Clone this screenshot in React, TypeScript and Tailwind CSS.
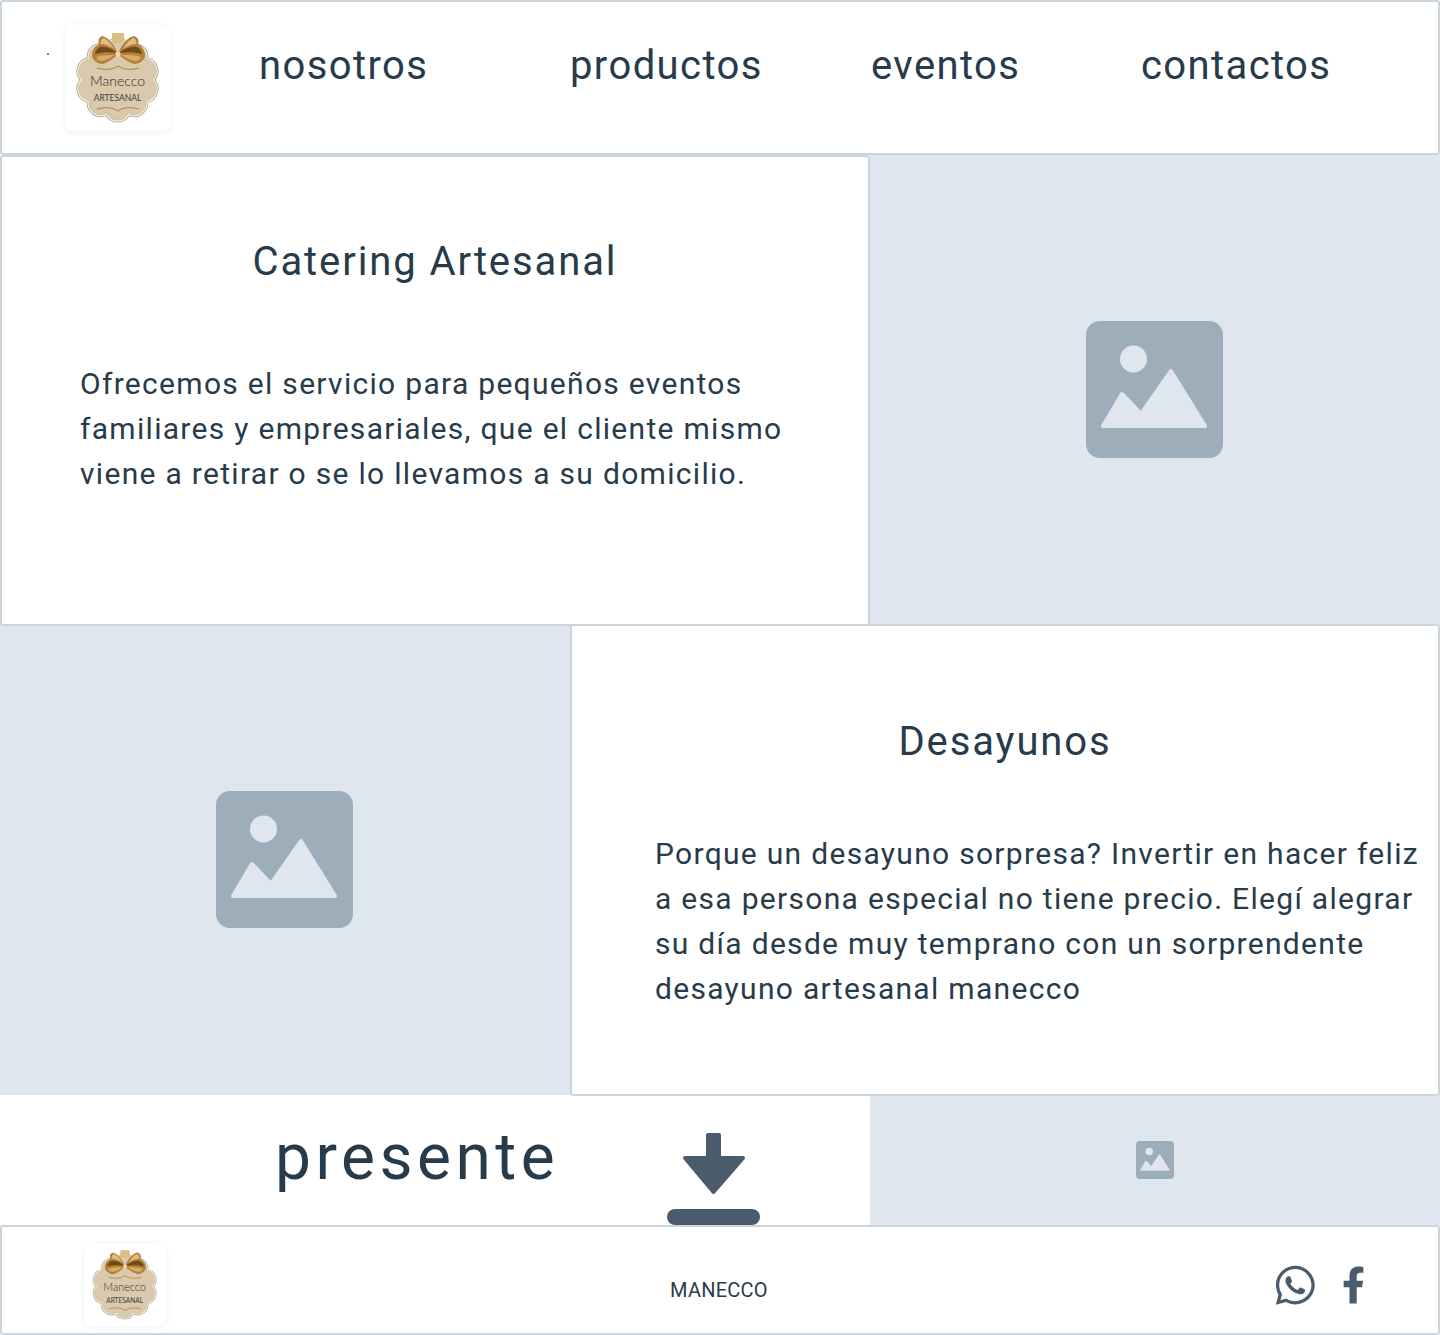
import React from 'react'
import {FaFacebookF, FaWhatsapp} from 'react-icons/fa'

const font = "font-['Roboto',sans-serif]"

// scalloped edge of the badge, lobes around a circle
const lobes = 10
const badgePoints = Array.from({length: lobes}, (_, i) => {
  const a = (i / lobes) * Math.PI * 2 + Math.PI / lobes
  return [52.5 + 34.5 * Math.sin(a), 55 + 34.5 * Math.cos(a)]
})
const badgePath =
  badgePoints
    .map(([x, y], i) => (i === 0 ? `M${x} ${y}` : `A11.500 11.500 0 0 0 ${x} ${y}`))
    .join(' ') +
  ` A11.500 11.500 0 0 0 ${badgePoints[0][0]} ${badgePoints[0][1]} Z`

const Logo: React.FC<{size: string}> = ({size}) => (
  <div
    className={`${size} shrink-0 rounded-lg bg-white shadow-[0_1px_6px_rgba(0,0,0,0.07)]`}
  >
    <svg viewBox="0 0 106 106" className="h-full w-full tracking-normal">
      <path d={badgePath} fill="#dbc9ae" stroke="#b3a37c" strokeWidth="5" />
      <path d={badgePath} fill="#dbc9ae" stroke="#f1eee5" strokeWidth="3.4" />
      <path d={badgePath} fill="#dbc9ae" stroke="#c4b896" strokeWidth="0.8" />
      <path d="M47 8h12v10H47z" fill="#dcbd84" />
      {/* bow wings */}
      <path
        d="M53 29C49 19 43 12 37 11 33 13 33 16 34 19 30 21 27 25 27 31 28 36 33 39 38 39 44 37 49 33 53 29Z"
        fill="#b5813a"
      />
      <path
        d="M53 29C57 19 63 12 69 11 74 13 74 16 73 19 77 21 80 25 80 31 79 36 74 39 69 39 63 37 57 33 53 29Z"
        fill="#b5813a"
      />
      <path
        d="M52 28C46 23 41 21 35 22 32 24 30 26 30 29 37 27 45 27 52 28ZM54 28C60 23 66 21 72 22 75 24 77 26 77 29 70 27 62 27 54 28Z"
        fill="#6e4a17"
      />
      <path
        d="M39 13C44 16 47 20 49 24 45 21 40 19 36 19 35 17 36 14 39 13ZM68 13C63 16 60 20 58 24 62 21 67 19 71 19 72 17 71 14 68 13Z"
        fill="#e0bd80"
      />
      <path
        d="M31 32C37 30 44 30 50 30 45 33 40 36 35 36 33 35 32 34 31 32ZM76 32C70 30 63 30 56 30 61 33 67 36 72 36 74 35 75 34 76 32Z"
        fill="#d8ac66"
      />
      <circle cx="53" cy="29" r="2.6" fill="#ecd8a8" />
      <path
        d="M32 43C40 45 47 45 53 41 59 45 66 45 74 43"
        fill="none"
        stroke="#a8803f"
        strokeWidth="1"
      />
      <text
        x="52.500"
        y="61"
        textAnchor="middle"
        fontFamily="Lato, sans-serif"
        fontSize="14"
        fontWeight="300"
        fill="#2f2d2c"
      >
        Manecco
      </text>
      <text
        x="52.500"
        y="76"
        textAnchor="middle"
        fontFamily="Lato, sans-serif"
        fontSize="8.500"
        fill="#3f3c3a"
      >
        ARTESANAL
      </text>
      <path
        d="M32 84C40 82 47 82 53 86 59 82 66 82 74 84"
        fill="none"
        stroke="#a8803f"
        strokeWidth="1"
      />
    </svg>
  </div>
)

const ImageIcon: React.FC<{size: string}> = ({size}) => (
  <svg viewBox="0 0 137 137" className={size}>
    <rect width="137" height="137" rx="14" fill="#9eadba" />
    <circle cx="47.5" cy="38" r="13.5" fill="#dfe6ee" />
    <path
      d="M17 105 36 73 55 93 85 50 119 105Z"
      fill="#dfe6ee"
      stroke="#dfe6ee"
      strokeWidth="4"
      strokeLinejoin="round"
    />
  </svg>
)

const DownloadIcon = () => (
  <svg viewBox="0 0 93 93" className="h-[93px] w-[93px] shrink-0">
    <path
      d="M41 3h11v23h24L46.500 60 18 26h23Z"
      fill="#4a5c6b"
      stroke="#4a5c6b"
      strokeWidth="4"
      strokeLinejoin="round"
    />
    <rect x="0" y="77" width="93" height="16" rx="8" fill="#4a5c6b" />
  </svg>
)

const ImagePanel: React.FC<{width: string}> = ({width}) => (
  <div
    className={`${width} flex items-center justify-center bg-[#dfe6ee] pr-[1px] pb-[1px]`}
  >
    <ImageIcon size="h-[137px] w-[137px]" />
  </div>
)

const TextCard: React.FC<{
  title: string
  lines: string[]
  box: string
  titleGap: string
  bodyGap: string
}> = ({title, lines, box, titleGap, bodyGap}) => (
  <div
    className={`${box} ${titleGap} relative z-10 w-[870px] rounded-[3px] border-2 border-[#cbd5e0] bg-white`}
  >
    <h2 className="text-center text-[40px] leading-[60px] tracking-[1.9px] text-[#283b4b]">
      {title}
    </h2>
    <p
      className={`${bodyGap} text-[30px] leading-[45px] tracking-[1.3px] whitespace-nowrap text-[#283b4b]`}
    >
      {lines.map((line) => (
        <span key={line} className="block">
          {line}
        </span>
      ))}
    </p>
  </div>
)

export default function App() {
  return (
    <div className={`${font} flex h-[1335px] w-[1440px] flex-col bg-white`}>
      <header className="relative flex h-[155px] items-start rounded-[3px] border-2 border-[#cbd5e0] bg-white pl-[63px] text-[40px] tracking-[1.4px] text-[#283b4b]">
        <span className="absolute top-[51px] left-[45px] h-[2px] w-[2px] rounded-full bg-[#4a5c6b]" />
        <div className="mt-[23px]">
          <Logo size="h-[106px] w-[106px]" />
        </div>
        <nav className="ml-[88px] flex pt-[34px] leading-[60px]">
          <a className="w-[311px]">nosotros</a>
          <a className="w-[301px]">productos</a>
          <a className="w-[270px]">eventos</a>
          <a>contactos</a>
        </nav>
      </header>

      <section className="flex h-[470px]">
        <TextCard
          title="Catering Artesanal"
          box="h-[471px] shrink-0"
          titleGap="pt-[75px]"
          bodyGap="mt-[69px] pl-[78px]"
          lines={[
            'Ofrecemos el servicio para pequeños eventos',
            'familiares y empresariales, que el cliente mismo',
            'viene a retirar o se lo llevamos a su domicilio.'
          ]}
        />
        <ImagePanel width="w-[570px]" />
      </section>

      <section className="flex h-[470px]">
        <ImagePanel width="w-[570px]" />
        <TextCard
          title="Desayunos"
          box="mt-[-1px] h-[472px] shrink-0"
          titleGap="pt-[86px]"
          bodyGap="mt-[59px] pl-[83px]"
          lines={[
            'Porque un desayuno sorpresa? Invertir en hacer feliz',
            'a esa persona especial no tiene precio. Elegí alegrar',
            'su día desde muy temprano con un sorprendente',
            'desayuno artesanal manecco'
          ]}
        />
      </section>

      <section className="flex h-[130px]">
        <div className="flex w-[870px] items-start overflow-hidden pt-[37px] pl-[275px]">
          <span className="mt-[-10px] w-[392px] text-[64px] leading-[72px] tracking-[4.5px] text-[#283b4b]">
            presente
          </span>
          <DownloadIcon />
        </div>
        <div className="flex w-[570px] items-center justify-center bg-[#dfe6ee]">
          <ImageIcon size="h-[38px] w-[38px]" />
        </div>
      </section>

      <footer className="flex h-[110px] items-center rounded-[3px] border-2 border-[#cbd5e0] bg-white pl-[82px]">
        <div className="mt-[10px]">
          <Logo size="h-[82px] w-[82px]" />
        </div>
        <span className="mt-[20px] ml-[504px] text-[20px] leading-[30px] tracking-[0.25px] text-[#283b4b]">
          MANECCO
        </span>
        <div className="mt-[10px] ml-[505px] flex items-center gap-[25px] text-[#4a5c6b]">
          <FaWhatsapp className="h-[44.5px] w-[44.5px]" />
          <FaFacebookF className="h-[38px] w-[23px]" />
        </div>
      </footer>
    </div>
  )
}
